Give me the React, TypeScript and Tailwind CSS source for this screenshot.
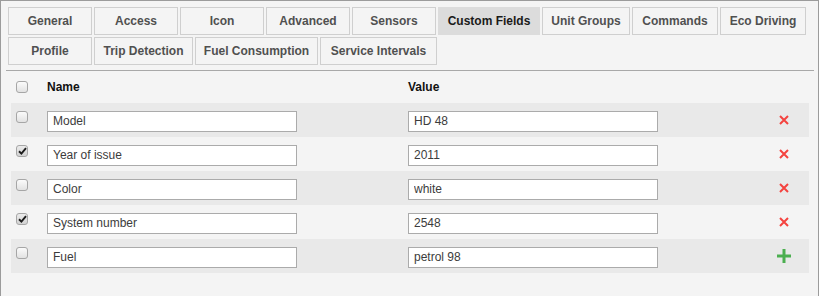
import React from 'react';

const tabRows = [
  [
    { label: 'General', w: 'w-[84px]' },
    { label: 'Access', w: 'w-[84px]' },
    { label: 'Icon', w: 'w-[84px]' },
    { label: 'Advanced', w: 'w-[84px]' },
    { label: 'Sensors', w: 'w-[84px]' },
    { label: 'Custom Fields', w: 'w-[102px]', active: true },
    { label: 'Unit Groups', w: 'w-[88px]' },
    { label: 'Commands', w: 'w-[86px]' },
    { label: 'Eco Driving', w: 'w-[86px]' },
  ],
  [
    { label: 'Profile', w: 'w-[84px]' },
    { label: 'Trip Detection', w: 'w-[99px]' },
    { label: 'Fuel Consumption', w: 'w-[123px]' },
    { label: 'Service Intervals', w: 'w-[117px]' },
  ],
];

const fields = [
  { name: 'Model', value: 'HD 48', checked: false },
  { name: 'Year of issue', value: '2011', checked: true },
  { name: 'Color', value: 'white', checked: false },
  { name: 'System number', value: '2548', checked: true },
  { name: 'Fuel', value: 'petrol 98', checked: false, isNew: true },
];

const Checkbox: React.FC<{ checked?: boolean }> = ({ checked }) => (
  <span
    className={`flex h-[12px] w-[12px] items-center justify-center rounded-[3px] border border-[#a6a6a6] ${
      checked ? 'bg-gradient-to-b from-[#ececec] to-[#d2d2d2]' : 'bg-gradient-to-b from-[#fbfbfb] to-[#e2e2e2]'
    }`}
  >
    {checked && (
      <svg width="9" height="8" viewBox="0 0 9 8">
        <path d="M1 4.3 L3.4 6.6 L8 1.2" fill="none" stroke="#1c1c1c" strokeWidth="1.9" />
      </svg>
    )}
  </span>
);

const DeleteIcon = () => (
  <svg width="10" height="10" viewBox="0 0 10 10">
    <path d="M1 1 L9 9 M9 1 L1 9" stroke="#f4433f" strokeWidth="2" />
  </svg>
);

const AddIcon = () => (
  <svg width="14" height="14" viewBox="0 0 14 14">
    <rect x="5.5" y="0" width="3" height="14" fill="#4caf50" />
    <rect x="0" y="5.5" width="14" height="3" fill="#4caf50" />
  </svg>
);

export default function App() {
  return (
    <div className="h-[296px] w-[819px] overflow-hidden border-l border-r border-t border-[#9b9b9b] bg-[#f4f4f4] font-['Liberation_Sans',Arial,sans-serif]">
      {/* Tabs */}
      <div className="flex flex-col gap-[2px] pl-[7px] pt-[6px]">
        {tabRows.map((row, i) => (
          <div key={i} className="flex gap-[2px]">
            {row.map((tab) => (
              <div
                key={tab.label}
                className={`flex h-[28px] items-center justify-center border text-[12px] font-bold ${tab.w} ${
                  tab.active
                    ? 'border-[#dcdcdc] bg-[#dcdcdc] text-[#1a1a1a]'
                    : 'border-[#cfcfcf] bg-[#f4f4f4] text-[#505050]'
                }`}
              >
                {tab.label}
              </div>
            ))}
          </div>
        ))}
      </div>

      <div className="ml-[5px] mr-[4px] mt-[5px] h-px bg-[#a8a8a8]" />

      {/* Custom fields table */}
      <div className="ml-[10px] w-[798px]">
        <div className="flex h-[32px] items-center text-[12px] font-bold text-[#111]">
          <div className="w-[36px] pl-[5px]">
            <Checkbox />
          </div>
          <div className="w-[361px]">Name</div>
          <div className="w-[350px]">Value</div>
          <div className="w-[51px]" />
        </div>

        {fields.map((f, i) => (
          <div key={f.name} className={`flex h-[34px] items-center ${i % 2 === 0 ? 'bg-[#e9e9e9]' : ''}`}>
            <div className="w-[36px] self-start pl-[5px] pt-[8px]">
              <Checkbox checked={f.checked} />
            </div>
            <div className="w-[361px]">
              <input
                readOnly
                value={f.name}
                className="h-[21px] w-[250px] border border-[#ababab] bg-white pl-[5px] text-[12px] text-[#3c3c3c] outline-none"
              />
            </div>
            <div className="w-[350px]">
              <input
                readOnly
                value={f.value}
                className="h-[21px] w-[250px] border border-[#ababab] bg-white pl-[5px] text-[12px] text-[#3c3c3c] outline-none"
              />
            </div>
            <div className="flex w-[51px] justify-center">{f.isNew ? <AddIcon /> : <DeleteIcon />}</div>
          </div>
        ))}
      </div>
    </div>
  );
}
